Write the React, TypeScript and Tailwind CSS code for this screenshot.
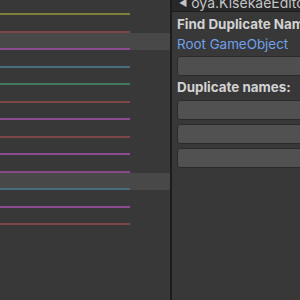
import React from 'react';

const tracks = [
  { color: '#80803c', hl: false },
  { color: '#7d4747', hl: false },
  { color: '#8c4c90', hl: true },
  { color: '#4a6a80', hl: false },
  { color: '#3f7a5e', hl: false },
  { color: '#7d4747', hl: false },
  { color: '#8c4c90', hl: false },
  { color: '#7d4747', hl: false },
  { color: '#8c4c90', hl: false },
  { color: '#844a88', hl: false },
  { color: '#4a6a80', hl: true },
  { color: '#8c4c90', hl: false },
  { color: '#7d4747', hl: false },
];

export default function App() {
  return (
    <div
      className="flex w-[300px] h-[300px] overflow-hidden bg-[#383838]"
      style={{ fontFamily: 'Inter, "Noto Sans", sans-serif' }}
    >
      {/* timeline tracks */}
      <div className="w-[170px] shrink-0 flex flex-col">
        {tracks.map((t, i) => (
          <div
            key={i}
            className={`flex flex-col justify-end ${i === 0 ? 'h-[15px]' : 'h-[17.5px]'} ${t.hl ? 'bg-[#484848]' : ''}`}
          >
            <div className="w-[130px] h-[2px]" style={{ backgroundColor: t.color }} />
          </div>
        ))}
      </div>

      <div className="w-[2px] shrink-0 bg-[#1c1c1c]" />

      {/* inspector window */}
      <div className="flex-1 flex flex-col min-w-0">
        <div className="h-[12px] bg-[#282828] border-b border-[#1e1e1e] flex items-end overflow-hidden">
          <div className="flex items-end gap-[4px] pl-[7px] whitespace-nowrap text-[14px] leading-[14px] text-[#c4c4c4] mb-[1px]">
            <span className="text-[9px] leading-[14px]">◀</span>
            <span>oya.KisekaeEditor</span>
          </div>
        </div>

        <div className="flex flex-col pl-[5px]">
          <div className="mt-[3px] h-[18px] leading-[18px] text-[13.4px] font-bold text-[#d2d2d2] whitespace-nowrap">
            Find Duplicate Names
          </div>
          <div className="mt-[2px] h-[18px] leading-[18px] text-[13.4px] text-[#70a0ec] whitespace-nowrap">
            Root GameObject
          </div>
          <div className="mt-[3px] h-[20px] w-[140px] rounded-[3px] bg-[#4f4f4f] border border-[#2b2b2b]" />
          <div className="mt-[2px] h-[18px] leading-[18px] text-[13.4px] font-bold text-[#d2d2d2] whitespace-nowrap">
            Duplicate names:
          </div>
          <div className="mt-[4px] flex flex-col gap-[4px]">
            <div className="h-[20px] w-[140px] rounded-[3px] bg-[#515151] border border-[#2b2b2b]" />
            <div className="h-[20px] w-[140px] rounded-[3px] bg-[#515151] border border-[#2b2b2b]" />
            <div className="h-[20px] w-[140px] rounded-[3px] bg-[#515151] border border-[#2b2b2b]" />
          </div>
        </div>
      </div>
    </div>
  );
}
